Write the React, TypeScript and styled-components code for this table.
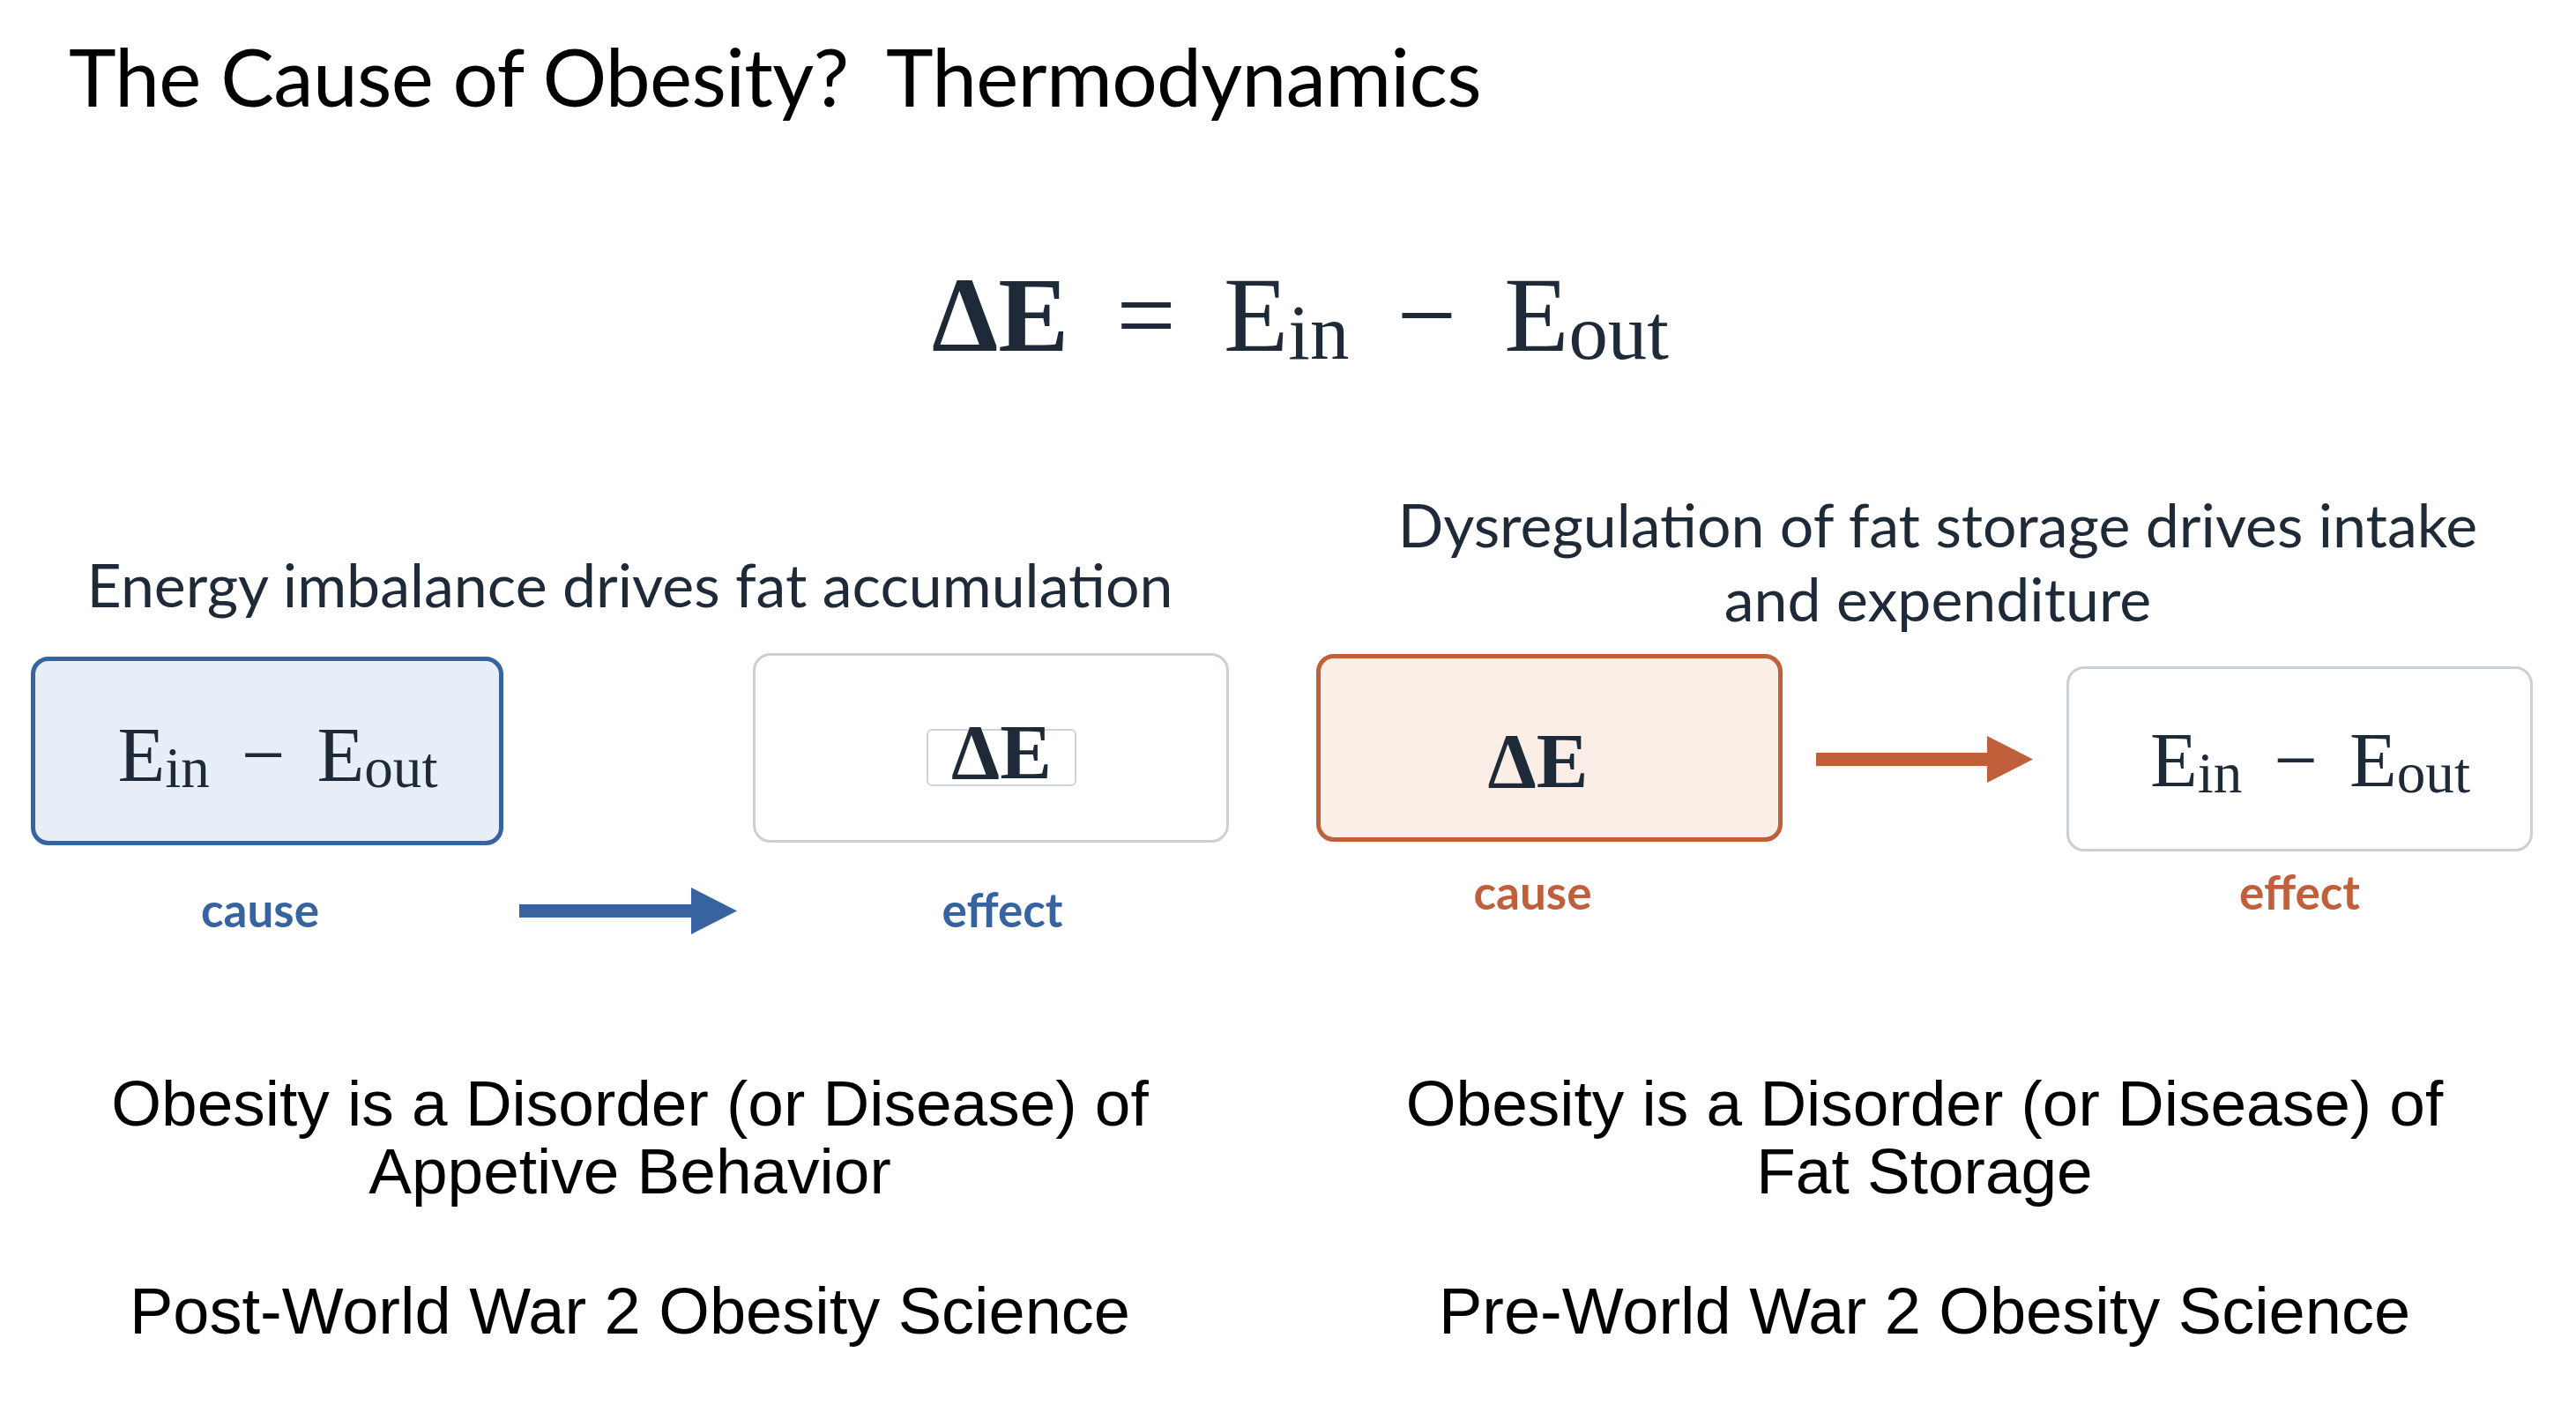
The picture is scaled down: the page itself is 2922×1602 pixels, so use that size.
import styled, { createGlobalStyle } from "styled-components";

const NAVY = "#1e2a38";
const BLUE = "#3763a1";
const ORANGE = "#c0603a";

const GlobalStyle = createGlobalStyle`
  html, body {
    margin: 0;
    padding: 0;
    background: #ffffff;
  }
  body {
    width: 2922px;
    height: 1602px;
    overflow: hidden;
  }
`;

function Arrow({ color, width }: { color: string; width: number }) {
  const h = 53;
  const head = 52;
  const shaftTop = (h - 15) / 2;
  return (
    <svg width={width} height={h} viewBox={`0 0 ${width} ${h}`}>
      <polygon
        points={`0,${shaftTop} ${width - head},${shaftTop} ${width - head},0 ${width},${h / 2} ${width - head},${h} ${width - head},${h - shaftTop} 0,${h - shaftTop}`}
        fill={color}
      />
    </svg>
  );
}

function Difference({ drop }: { drop: number }) {
  return (
    <S.Expr $drop={drop}>
      <span>
        E<S.Sub>in</S.Sub>
      </span>
      <span>−</span>
      <span>
        E<S.Sub>out</S.Sub>
      </span>
    </S.Expr>
  );
}

function App() {
  return (
    <S.Page>
      <GlobalStyle />
      <S.Title>{"The Cause of Obesity?  Thermodynamics"}</S.Title>

      <S.Equation>
        <S.Delta>ΔE</S.Delta>
        <span>=</span>
        <span>
          E<S.Sub>in</S.Sub>
        </span>
        <span>−</span>
        <span>
          E<S.Sub>out</S.Sub>
        </span>
      </S.Equation>

      <S.Columns>
        <S.Column>
          <S.Subtitle $lift={16}>Energy imbalance drives fat accumulation</S.Subtitle>
          <S.Diagram>
            <S.Unit $width={536} $top={4}>
              <S.Box $height={214} $tone="blue">
                <Difference drop={24} />
              </S.Box>
              <S.Label $color={BLUE} $top={43} $dx={-8}>cause</S.Label>
            </S.Unit>
            <S.ArrowSlot $top={266}>
              <Arrow color={BLUE} width={247} />
            </S.ArrowSlot>
            <S.Unit $width={540} $top={0}>
              <S.Box $height={215} $tone="plain">
                <S.Framed>ΔE</S.Framed>
              </S.Box>
              <S.Label $color={BLUE} $top={46} $dx={13}>effect</S.Label>
            </S.Unit>
          </S.Diagram>
          <S.Verdict>
            Obesity is a Disorder (or Disease) of
            <br />
            Appetive Behavior
          </S.Verdict>
          <S.Era>Post-World War 2 Obesity Science</S.Era>
        </S.Column>

        <S.Column>
          <S.Subtitle $lift={0} $shift={30}>
            Dysregulation of fat storage drives intake
            <br />
            and expenditure
          </S.Subtitle>
          <S.Diagram>
            <S.Unit $width={529} $top={1}>
              <S.Box $height={213} $tone="orange">
                <S.Delta $small>ΔE</S.Delta>
              </S.Box>
              <S.Label $color={ORANGE} $top={27} $dx={-19}>cause</S.Label>
            </S.Unit>
            <S.ArrowSlot $top={94}>
              <Arrow color={ORANGE} width={246} />
            </S.ArrowSlot>
            <S.Unit $width={529} $top={15}>
              <S.Box $height={210} $tone="plain">
                <Difference drop={18} />
              </S.Box>
              <S.Label $color={ORANGE} $top={16} $dx={0}>effect</S.Label>
            </S.Unit>
          </S.Diagram>
          <S.Verdict>
            Obesity is a Disorder (or Disease) of
            <br />
            Fat Storage
          </S.Verdict>
          <S.Era>Pre-World War 2 Obesity Science</S.Era>
        </S.Column>
      </S.Columns>
    </S.Page>
  );
}

const tones = {
  blue: { border: BLUE, fill: "#e8eef8", width: 5 },
  orange: { border: ORANGE, fill: "#fbeee6", width: 5 },
  plain: { border: "#c9cfd6", fill: "#ffffff", width: 3 },
};

const S = {
  Page: styled.div`
    box-sizing: border-box;
    width: 2922px;
    height: 1602px;
    padding: 0 49px 0 35px;
    background: #ffffff;
  `,

  Title: styled.h1`
    margin: 0;
    padding: 40px 0 0 43px;
    font-family: Lato, "Open Sans", sans-serif;
    font-weight: 400;
    font-size: 91px;
    line-height: 92px;
    letter-spacing: -0.7px;
    color: #000000;
    white-space: pre;
  `,

  Equation: styled.div`
    display: flex;
    justify-content: center;
    align-items: baseline;
    gap: 54px;
    margin-top: 166px;
    padding-left: 42px;
    height: 120px;
    font-family: "Liberation Serif", "DejaVu Serif", serif;
    font-size: 120px;
    line-height: 120px;
    color: ${NAVY};
  `,

  Delta: styled.span<{ $small?: boolean }>`
    font-family: "Liberation Serif", "DejaVu Serif", serif;
    font-weight: 700;
    color: ${NAVY};
    font-size: ${(p) => (p.$small ? "88px" : "inherit")};
    margin: ${(p) => (p.$small ? "30px 26px 0 0" : "0")};
  `,

  Sub: styled.span`
    font-size: 0.74em;
    vertical-align: -0.1em;
  `,

  Expr: styled.div<{ $drop: number }>`
    display: flex;
    align-items: baseline;
    gap: 36px;
    padding: ${(p) => p.$drop}px 0 0 24px;
    font-family: "Liberation Serif", "DejaVu Serif", serif;
    font-size: 88px;
    line-height: 88px;
    color: ${NAVY};
  `,

  Framed: styled.span`
    display: inline-block;
    box-sizing: border-box;
    height: 65px;
    padding: 0 26px;
    margin: 22px 0 0 24px;
    border: 2px solid #cfd4da;
    border-radius: 6px;
    font-family: "Liberation Serif", "DejaVu Serif", serif;
    font-weight: 700;
    font-size: 88px;
    line-height: 49px;
    color: ${NAVY};
  `,

  Columns: styled.div`
    display: grid;
    grid-template-columns: 1359px 1380px;
    column-gap: 99px;
    margin-top: 135px;
  `,

  Column: styled.div`
    display: flex;
    flex-direction: column;
  `,

  Subtitle: styled.div<{ $lift: number; $shift?: number }>`
    box-sizing: border-box;
    height: 168px;
    display: flex;
    align-items: flex-end;
    justify-content: center;
    padding-bottom: ${(p) => p.$lift}px;
    padding-left: ${(p) => p.$shift ?? 0}px;
    text-align: center;
    font-family: Lato, "Open Sans", sans-serif;
    font-size: 68px;
    line-height: 84px;
    color: ${NAVY};
  `,

  Diagram: styled.div`
    display: flex;
    justify-content: space-between;
    align-items: flex-start;
    height: 320px;
    margin-top: 20px;
  `,

  Unit: styled.div<{ $width: number; $top: number }>`
    display: flex;
    flex-direction: column;
    align-items: center;
    width: ${(p) => p.$width}px;
    margin-top: ${(p) => p.$top}px;
  `,

  Box: styled.div<{ $height: number; $tone: keyof typeof tones }>`
    box-sizing: border-box;
    display: flex;
    align-items: center;
    justify-content: center;
    width: 100%;
    height: ${(p) => p.$height}px;
    border: ${(p) => tones[p.$tone].width}px solid ${(p) => tones[p.$tone].border};
    border-radius: 20px;
    background: ${(p) => tones[p.$tone].fill};
  `,

  Label: styled.div<{ $color: string; $top: number; $dx: number }>`
    margin-top: ${(p) => p.$top}px;
    padding-left: ${(p) => Math.max(0, p.$dx) * 2}px;
    padding-right: ${(p) => Math.max(0, -p.$dx) * 2}px;
    font-family: Lato, "Open Sans", sans-serif;
    font-weight: 700;
    font-size: 53px;
    line-height: 60px;
    color: ${(p) => p.$color};
  `,

  ArrowSlot: styled.div<{ $top: number }>`
    display: flex;
    margin-top: ${(p) => p.$top}px;
  `,

  Verdict: styled.div`
    margin-top: 152px;
    text-align: center;
    font-family: "Liberation Sans", Arial, sans-serif;
    font-size: 73px;
    line-height: 77px;
    color: #000000;
  `,

  Era: styled.div`
    margin-top: 82px;
    text-align: center;
    font-family: "Liberation Sans", Arial, sans-serif;
    font-size: 74px;
    line-height: 77px;
    color: #000000;
  `,
};

export default App;
